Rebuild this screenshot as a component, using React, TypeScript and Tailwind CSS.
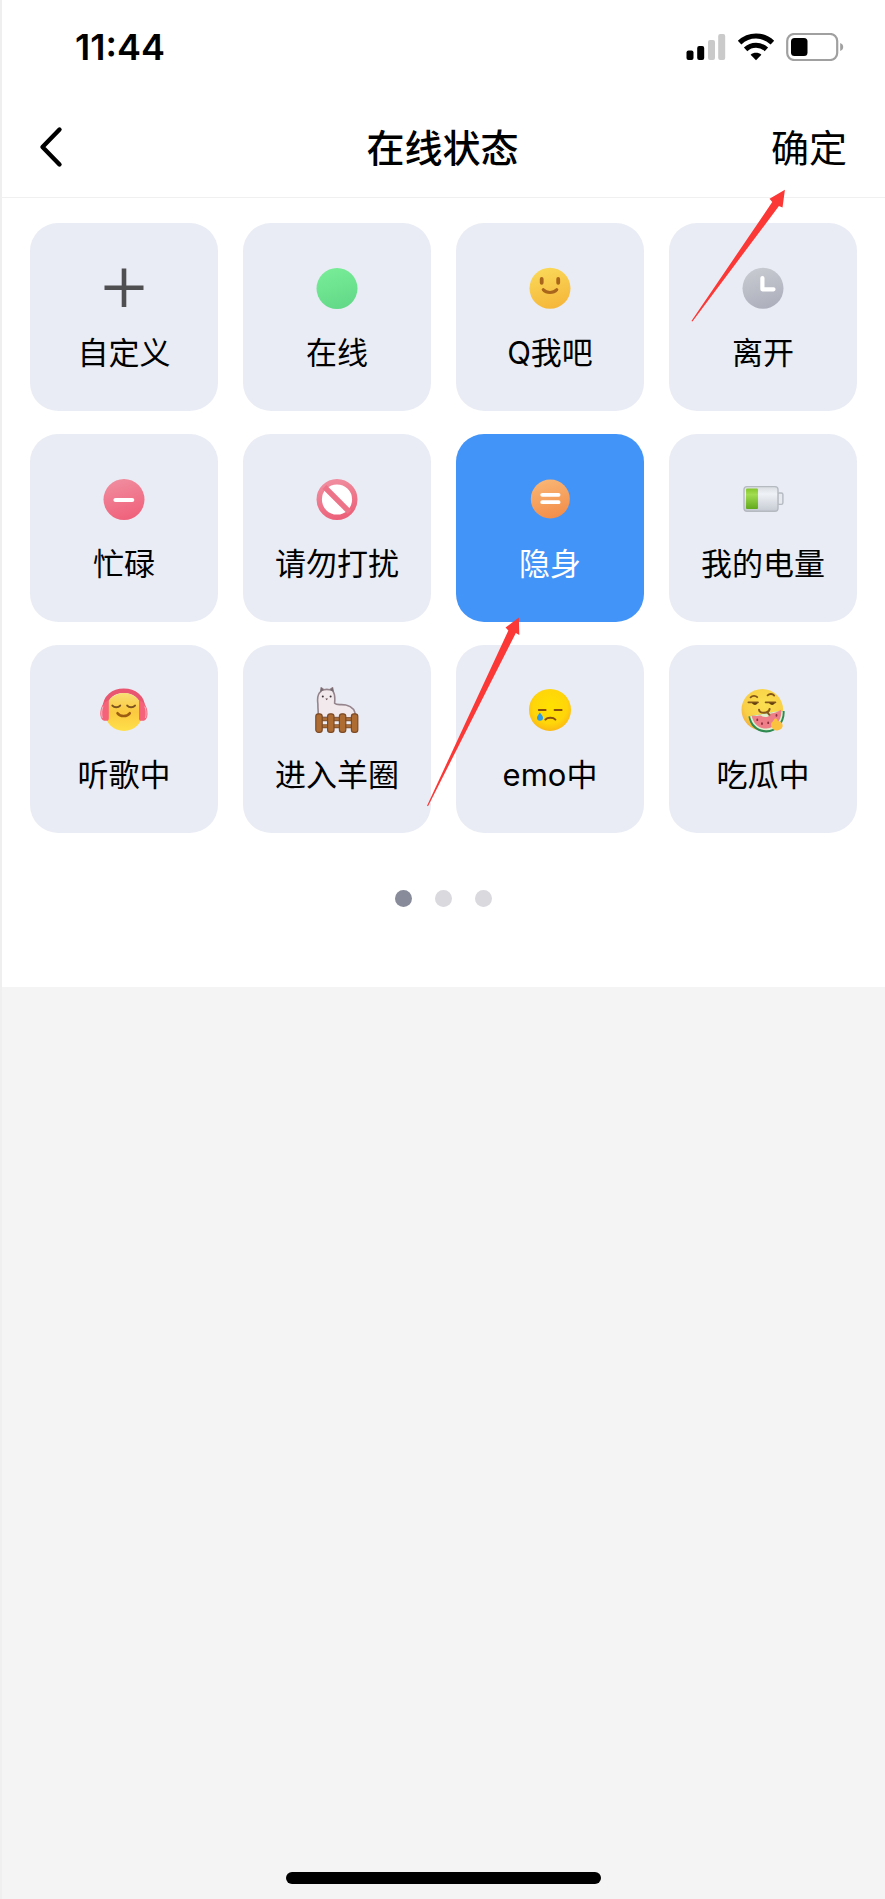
import { useState } from "react";
import type { ReactNode } from "react";

type Status = {
  label: string;
  icon: ReactNode;
};

type GradientProps = {
  id: string;
  from: string;
  to: string;
};

function Gradient({ id, from, to }: GradientProps) {
  return (
    <linearGradient id={id} x1="0.35" y1="0" x2="0.65" y2="1">
      <stop offset="0" stopColor={from} />
      <stop offset="1" stopColor={to} />
    </linearGradient>
  );
}

function Glyph({ children }: { children: ReactNode }) {
  return (
    <svg aria-hidden="true" viewBox="0 0 48 48" fill="none" className="size-12 shrink-0">
      {children}
    </svg>
  );
}

const statuses: Status[] = [
  {
    label: "自定义",
    icon: (
      <Glyph>
        <path d="M24 3.5V42M4.5 22.8H43.5" stroke="#4f4f51" strokeWidth="4.6" />
      </Glyph>
    ),
  },
  {
    label: "在线",
    icon: (
      <Glyph>
        <Gradient id="online" from="#78ec97" to="#62d988" />
        <circle cx="24" cy="23.5" r="20.5" fill="url(#online)" />
      </Glyph>
    ),
  },
  {
    label: "Q我吧",
    icon: (
      <Glyph>
        <Gradient id="smile" from="#fad858" to="#f5b63a" />
        <circle cx="24" cy="23.3" r="20.5" fill="url(#smile)" />
        <path d="M15.7 14V17.8M32.2 14V17.8" stroke="#a9651b" strokeWidth="3.8" strokeLinecap="round" />
        <path d="M17.3 24.8C20.5 28.4 27.5 28.4 30.7 24.8" stroke="#a9651b" strokeWidth="3.2" strokeLinecap="round" />
      </Glyph>
    ),
  },
  {
    label: "离开",
    icon: (
      <Glyph>
        <Gradient id="away" from="#c8cad1" to="#acafbb" />
        <circle cx="24" cy="23.3" r="20.5" fill="url(#away)" />
        <path d="M23.4 13V24.3H34.5" stroke="#fff" strokeWidth="4.2" strokeLinecap="round" strokeLinejoin="round" />
      </Glyph>
    ),
  },
  {
    label: "忙碌",
    icon: (
      <Glyph>
        <Gradient id="busy" from="#f08c9e" to="#f0607a" />
        <circle cx="24" cy="23.5" r="20.5" fill="url(#busy)" />
        <path d="M15.5 24H32.2" stroke="#fff" strokeWidth="4.2" strokeLinecap="round" />
      </Glyph>
    ),
  },
  {
    label: "请勿打扰",
    icon: (
      <Glyph>
        <Gradient id="dnd" from="#f08c9e" to="#ec6179" />
        <circle cx="24" cy="23.5" r="17.8" fill="#fff" stroke="url(#dnd)" strokeWidth="5.4" />
        <path d="M11.5 11L36.5 36" stroke="#ec7388" strokeWidth="5.4" />
      </Glyph>
    ),
  },
  {
    label: "隐身",
    icon: (
      <Glyph>
        <Gradient id="invisible" from="#f9b574" to="#f38d49" />
        <circle cx="24.3" cy="23" r="19.5" fill="url(#invisible)" />
        <path d="M16.2 18.8H32.6M16.2 26.2H32.6" stroke="#fff" strokeWidth="3.8" strokeLinecap="round" />
      </Glyph>
    ),
  },
  {
    label: "我的电量",
    icon: (
      <Glyph>
        <linearGradient id="shell" x1="0" y1="0" x2="0" y2="1">
          <stop offset="0" stopColor="#d9dde2" />
          <stop offset="0.3" stopColor="#eff2f6" />
          <stop offset="1" stopColor="#c6cbd3" />
        </linearGradient>
        <linearGradient id="charge" x1="0" y1="0" x2="0" y2="1">
          <stop offset="0" stopColor="#85c62c" />
          <stop offset="0.3" stopColor="#a2dc50" />
          <stop offset="1" stopColor="#62a91e" />
        </linearGradient>
        <rect x="38.5" y="17" width="5.4" height="11.4" rx="1.6" fill="#e6e9ee" stroke="#b5bac2" strokeWidth="1.4" />
        <rect x="5" y="10.6" width="34" height="24.6" rx="3" fill="url(#shell)" stroke="#b5bac1" strokeWidth="1.4" />
        <rect x="7" y="12.4" width="12" height="20.6" rx="1" fill="url(#charge)" />
      </Glyph>
    ),
  },
  {
    label: "听歌中",
    icon: (
      <Glyph>
        <linearGradient id="listen" x1="0" y1="0" x2="0" y2="1">
          <stop offset="0" stopColor="#f8df74" />
          <stop offset="0.5" stopColor="#fbc93f" />
          <stop offset="1" stopColor="#ffe04a" />
        </linearGradient>
        <path d="M4.5 22C5 9.5 13.5 3.8 23.8 3.8S42.8 9.5 43.3 22" stroke="#e95670" strokeWidth="4.4" />
        <circle cx="23.9" cy="25" r="19" fill="url(#listen)" />
        <path d="M8.8 13V31.5C8.8 33 8 33.8 6.5 33.8H5.5C1.5 33.8 0.3 30 0.3 26.5C0.3 20 3.5 15 8.8 13Z" fill="#f4637a" />
        <path d="M39 13V31.5C39 33 39.8 33.8 41.3 33.8H42.3C46.3 33.8 47.5 30 47.5 26.5C47.5 20 44.3 15 39 13Z" fill="#f4637a" />
        <path d="M3 19.5C1.6 22.5 1.4 27 2.2 31M44.8 19.5C46.2 22.5 46.4 27 45.6 31" stroke="#fbb6c0" strokeWidth="1" />
        <path d="M12.4 18.6C14.4 20.8 18.2 20.8 20.2 18.6M27.2 18.6C29.2 20.8 33 20.8 35 18.6" stroke="#7d5420" strokeWidth="2" strokeLinecap="round" />
        <path d="M17.5 26.2C20.3 30 27 30 29.8 26.2" stroke="#9c5d12" strokeWidth="2.6" strokeLinecap="round" />
      </Glyph>
    ),
  },
  {
    label: "进入羊圈",
    icon: (
      <Glyph>
        <path
          d="M5 30C5.6 26 4.8 22 4.9 17C4.2 12 4.8 6.5 8 4.3L8.2 0.8L11 2.8C12.5 2.3 15 2.3 16.5 2.8L19.5 0.8L20.2 4.6C22.2 7.5 22 12 21.6 16.3C24 18.8 28 16.8 33 18C39.5 19.4 42.8 24 42.6 31Z"
          fill="#f1e9ec"
          stroke="#95848c"
          strokeWidth="1.6"
          strokeLinejoin="round"
        />
        <path d="M8.2 0.4L7 5L11 3.2ZM19.5 0.4L20.8 5L16.8 3.2Z" fill="#776970" />
        <circle cx="9.8" cy="9.4" r="1" fill="#3c3238" />
        <circle cx="17.6" cy="9.4" r="1" fill="#3c3238" />
        <path d="M12.4 11.4H15L13.7 13.2Z" fill="#5c4449" />
        <path d="M4 32.2H44M4 39.2H44" stroke="#83512b" strokeWidth="4" />
        <path d="M4 32.2H44M4 39.2H44" stroke="#a96d38" strokeWidth="2.2" />
        <g fill="#ae6c33" stroke="#7d4a25" strokeWidth="1.2">
          <rect x="2.8" y="26.8" width="6.4" height="18.6" rx="2.6" />
          <rect x="14.6" y="26.8" width="6.4" height="18.6" rx="2.6" />
          <rect x="26.4" y="26.8" width="6.4" height="18.6" rx="2.6" />
          <rect x="38.4" y="26.8" width="6.4" height="18.6" rx="2.6" />
        </g>
      </Glyph>
    ),
  },
  {
    label: "emo中",
    icon: (
      <Glyph>
        <radialGradient id="emo" cx="0.5" cy="0.42" r="0.62">
          <stop offset="0" stopColor="#ffe000" />
          <stop offset="0.65" stopColor="#ffd60a" />
          <stop offset="1" stopColor="#fbb315" />
        </radialGradient>
        <circle cx="24" cy="22.9" r="21" fill="url(#emo)" />
        <path d="M12.8 23H19.6M28.6 23H35.6" stroke="#8a4d10" strokeWidth="2" strokeLinecap="round" />
        <path d="M19.4 32.6C21.5 30.2 27.2 30.2 29.4 32.6" stroke="#8a4d10" strokeWidth="2" strokeLinecap="round" />
        <path d="M13.8 25.4C15.4 27.4 17 29 17 30.8A3 3 0 0 1 11 30.8C11 29 12.6 27.4 13.8 25.4Z" fill="#2d9be8" />
      </Glyph>
    ),
  },
  {
    label: "吃瓜中",
    icon: (
      <Glyph>
        <radialGradient id="melon" cx="0.55" cy="0.35" r="0.7">
          <stop offset="0" stopColor="#fbe052" />
          <stop offset="0.7" stopColor="#f9cf45" />
          <stop offset="1" stopColor="#f2a93a" />
        </radialGradient>
        <circle cx="23.3" cy="22.8" r="20.8" fill="url(#melon)" />
        <path d="M11.6 10.4C13.4 8.4 16.6 8.4 18.2 10.2M28.6 8.4C30.6 6.4 33.6 6.6 35.2 8.6" stroke="#84571a" strokeWidth="1.8" strokeLinecap="round" />
        <path d="M9.4 15.3H19M26.6 15.3H36.4" stroke="#84571a" strokeWidth="1.8" strokeLinecap="round" />
        <path d="M13 15.8H18.6C18.4 18.6 13.6 18.6 13 15.8ZM30.2 15.8H35.8C35.6 18.6 30.8 18.6 30.2 15.8Z" fill="#63400f" />
        <path d="M9.4 29.6C11 40 18.5 45.6 27.5 45.4C38 45.2 46.4 36 45.6 24L42 24Z" fill="#2f8a52" />
        <path d="M11 29.2C13 38 19.5 43.4 27.4 43.2C36.6 43 44 35.5 43.8 24.2L40 24Z" fill="#dff0cf" />
        <path d="M12.6 28.4C16 30 19.6 28.4 22 28.6C25 31.4 31 30 31.6 26.4C35.4 26.6 39 24.4 42.2 22.8C43.4 33 36.5 41.2 27.5 41.5C20 41.7 14.3 36.8 12.6 28.4Z" fill="#ee7f88" />
        <path d="M20 22.8C20 26.8 29.8 26.8 30.6 22M28.6 25.6L30.4 27.8" stroke="#84571a" strokeWidth="2" strokeLinecap="round" strokeLinejoin="round" />
        <path d="M18.3 32.4V33.2M23 36.2V37M29.2 35.4V36.2M37.5 28V28.8" stroke="#8d2f3d" strokeWidth="1.8" strokeLinecap="round" />
        <path d="M32.6 35.4C34 34.6 34.6 33.2 35.6 31.8C37.6 30.8 39 32.6 38.6 34C42 34 44.2 36.8 43.6 39.6C42.6 43.8 36.4 44.8 33.6 41.4C32 39.6 31.6 37.2 32.6 35.4Z" fill="#fbc23f" />
      </Glyph>
    ),
  },
];

function StatusBar() {
  return (
    <div className="flex h-[94px] items-center justify-between pl-[73px] pr-10">
      <span className="text-[36px] leading-none font-semibold">11:44</span>
      <div className="flex items-center gap-[11px]">
        <svg aria-hidden="true" viewBox="0 0 40 28" className="h-7 w-10">
          <rect x="0.5" y="17.5" width="7" height="9.5" rx="2" />
          <rect x="11.2" y="13" width="7" height="14" rx="2" />
          <rect x="22" y="7" width="7" height="20" rx="2" fill="#cacaca" />
          <rect x="32.2" y="1" width="7" height="26" rx="2" fill="#cacaca" />
        </svg>
        <svg aria-hidden="true" viewBox="0 0 38 28" fill="none" className="h-7 w-[38px]">
          <path d="M2.6 9.6C12 0.8 26 0.8 35.4 9.6" stroke="#000" strokeWidth="5.2" />
          <path d="M8.6 16.4C14.4 11 23.6 11 29.4 16.4" stroke="#000" strokeWidth="5" />
          <path d="M13.6 21.8C16.6 19.2 21.4 19.2 24.4 21.8L19 27.2Z" fill="#000" />
        </svg>
        <svg aria-hidden="true" viewBox="0 0 59 28" fill="none" className="h-7 w-[59px]">
          <rect x="1.2" y="1" width="50" height="26" rx="7" stroke="#a0a0a0" strokeWidth="2.2" />
          <rect x="5" y="5" width="16.5" height="18" rx="3.5" fill="#000" />
          <path d="M54.2 10V18C58.2 16.8 58.2 11.2 54.2 10Z" fill="#a0a0a0" />
        </svg>
      </div>
    </div>
  );
}

function NavBar() {
  return (
    <header className="grid h-[104px] grid-cols-[1fr_auto_1fr] items-center border-b border-[#f0f0f0] pt-1 pl-9 pr-[38px]">
      <button type="button" aria-label="返回" className="justify-self-start">
        <svg aria-hidden="true" viewBox="0 0 28 44" fill="none" className="h-11 w-7">
          <path d="M21.5 3.5L4.5 21L21.5 38.5" stroke="#000" strokeWidth="4.4" strokeLinecap="round" strokeLinejoin="round" />
        </svg>
      </button>
      <h1 className="text-[38px] leading-none font-medium">在线状态</h1>
      <button type="button" className="justify-self-end text-[38px] leading-none">
        确定
      </button>
    </header>
  );
}

// Hand-drawn pointers to the chosen tile and the confirm button.
function Pointers() {
  return (
    <svg
      aria-hidden="true"
      viewBox="0 0 885 987"
      fill="#fb3836"
      className="pointer-events-none absolute inset-x-0 top-0 w-full"
    >
      <path d="M784.7 190.3L769.3 199.3L772 202.5L691 321.8L692 322.2L778.7 206.5L782.3 208Z" />
      <path d="M518 619L504.7 629L507.5 632L426 807.5L427 808L515 634.5L518.5 636.5Z" />
    </svg>
  );
}

export default function App() {
  const [selected, setSelected] = useState("隐身");
  const [page, setPage] = useState(0);

  return (
    <div className="relative flex min-h-screen flex-col border-l-2 border-[#efefef] bg-[#f4f4f4] font-['Inter','Noto_Sans_CJK_SC',sans-serif] text-black">
      <div className="bg-white">
        <StatusBar />
        <NavBar />
        <main className="px-7 pt-[25px] pb-20">
          <div className="grid grid-cols-4 gap-x-[25px] gap-y-[23px]">
            {statuses.map(({ label, icon }) => (
              <button
                key={label}
                type="button"
                aria-pressed={label === selected}
                onClick={() => setSelected(label)}
                className={`flex h-[188px] flex-col items-center gap-5 rounded-[28px] pt-[42px] ${
                  label === selected ? "bg-[#4394f8] text-white" : "bg-[#e9ecf4]"
                }`}
              >
                {icon}
                <span className="text-[31px] leading-10 whitespace-nowrap">{label}</span>
              </button>
            ))}
          </div>
          <div className="mt-[57px] flex justify-center gap-[23px]">
            {[0, 1, 2].map((index) => (
              <button
                key={index}
                type="button"
                aria-label={`第${index + 1}页`}
                onClick={() => setPage(index)}
                className={`size-[17px] rounded-full ${index === page ? "bg-[#888b99]" : "bg-[#d9d9de]"}`}
              />
            ))}
          </div>
        </main>
      </div>
      <div className="mx-auto mt-auto mb-[15px] h-3 w-[315px] rounded-full bg-black" />
      <Pointers />
    </div>
  );
}
